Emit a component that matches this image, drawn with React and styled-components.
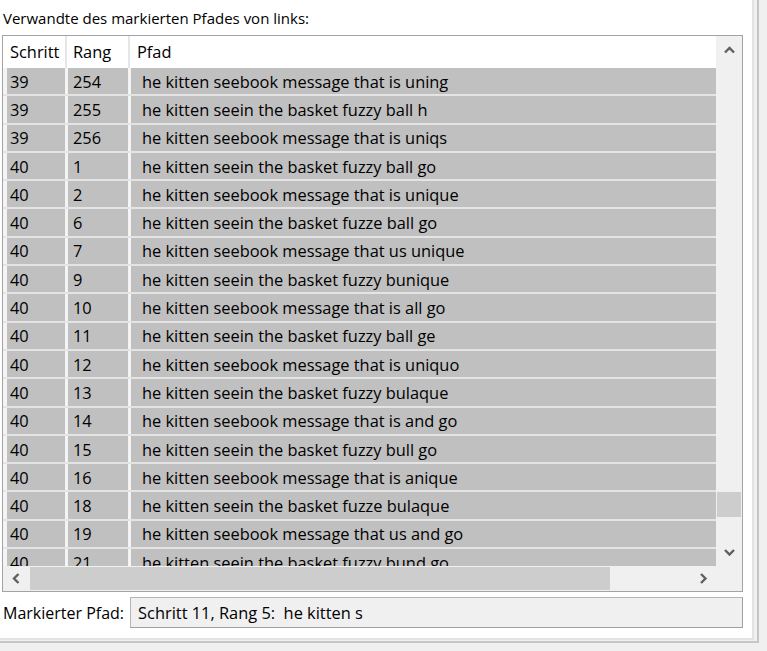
import React from "react";
import styled, { createGlobalStyle } from "styled-components";

const GlobalStyle = createGlobalStyle`
  html, body {
    margin: 0;
    padding: 0;
    background: #f0f0f0;
  }
  body {
    font-family: "Open Sans", "Noto Sans", sans-serif;
    color: #000;
  }
`;

const rows = [
  ["39", "254", "he kitten seebook message that is uning"],
  ["39", "255", "he kitten seein the basket fuzzy ball h"],
  ["39", "256", "he kitten seebook message that is uniqs"],
  ["40", "1", "he kitten seein the basket fuzzy ball go"],
  ["40", "2", "he kitten seebook message that is unique"],
  ["40", "6", "he kitten seein the basket fuzze ball go"],
  ["40", "7", "he kitten seebook message that us unique"],
  ["40", "9", "he kitten seein the basket fuzzy bunique"],
  ["40", "10", "he kitten seebook message that is all go"],
  ["40", "11", "he kitten seein the basket fuzzy ball ge"],
  ["40", "12", "he kitten seebook message that is uniquo"],
  ["40", "13", "he kitten seein the basket fuzzy bulaque"],
  ["40", "14", "he kitten seebook message that is and go"],
  ["40", "15", "he kitten seein the basket fuzzy bull go"],
  ["40", "16", "he kitten seebook message that is anique"],
  ["40", "18", "he kitten seein the basket fuzze bulaque"],
  ["40", "19", "he kitten seebook message that us and go"],
  ["40", "21", "he kitten seein the basket fuzzy bund go"],
];

const Screen = styled.div`
  width: 767px;
  height: 651px;
  overflow: hidden;
  background: #f0f0f0;
`;

const Frame = styled.div`
  width: 759px;
  height: 643px;
  border-right: 2px solid #c6c6c6;
  border-bottom: 2px solid #c6c6c6;
  background: #f0f0f0;
  box-sizing: border-box;
`;

const Panel = styled.div`
  width: 754px;
  height: 640px;
  box-sizing: border-box;
  background: #fff;
  border-right: 2px solid #e3e3e3;
  border-bottom: 2px solid #e3e3e3;
  display: flex;
  flex-direction: column;
  padding: 0 0 0 2px;
`;

const Title = styled.div`
  height: 35px;
  display: flex;
  align-items: center;
  padding-left: 1px;
  padding-top: 1px;
  box-sizing: border-box;
  font-size: 15px;
`;

const ListBox = styled.div`
  width: 741px;
  height: 557px;
  box-sizing: border-box;
  border: 1px solid #a3a3a3;
  display: grid;
  grid-template-columns: 1fr 26px;
  grid-template-rows: 1fr 25px;
  background: #fff;
`;

const Content = styled.div`
  overflow: hidden;
  display: flex;
  flex-direction: column;
  font-size: 16.4px;
`;

const cols = "58px 60px 1fr";

const HeaderRow = styled.div`
  display: grid;
  grid-template-columns: ${cols};
  column-gap: 3px;
  height: 32px;
  flex-shrink: 0;
  padding-left: 4px;
  background: #fff;
`;

const HeaderCell = styled.div`
  display: flex;
  align-items: center;
  padding-left: ${(p) => p.$pad}px;
  padding-bottom: 2px;
  white-space: nowrap;
  position: relative;
  &::after {
    content: "";
    display: ${(p) => (p.$last ? "none" : "block")};
    position: absolute;
    right: -2px;
    top: 0;
    bottom: 0;
    width: 2px;
    background: #e6e6e6;
  }
`;

const Row = styled.div`
  display: grid;
  grid-template-columns: ${cols};
  column-gap: 3px;
  height: 26.3px;
  flex-shrink: 0;
  padding-left: 4px;
  border-bottom: 2px solid #e4e4e4;
  background: #f4f4f4;
`;

const Cell = styled.div`
  background: #c0c0c0;
  display: flex;
  align-items: center;
  padding-left: ${(p) => p.$pad}px;
  white-space: nowrap;
  overflow: hidden;
`;

const VScroll = styled.div`
  background: #f0f0f0;
  display: flex;
  flex-direction: column;
`;

const HScroll = styled.div`
  background: #f0f0f0;
  display: flex;
  align-items: center;
`;

const Corner = styled.div`
  background: #f0f0f0;
`;

const ArrowButton = styled.div`
  flex: 0 0 ${(p) => p.$size}px;
  display: flex;
  align-items: center;
  justify-content: center;
  align-self: stretch;
`;

const VTrack = styled.div`
  flex: 1;
  padding: 0 1px;
`;

const VThumb = styled.div`
  margin-top: ${(p) => p.$offset}px;
  height: 25px;
  background: #cdcdcd;
`;

const HTrack = styled.div`
  flex: 1;
  align-self: stretch;
  padding: 1px 0;
  display: flex;
`;

const HThumb = styled.div`
  margin-left: ${(p) => p.$offset}px;
  width: ${(p) => p.$size}px;
  background: #cdcdcd;
`;

const Bottom = styled.div`
  width: 741px;
  display: flex;
  align-items: center;
  gap: 6px;
  margin-top: 5px;
  padding-left: 1px;
  box-sizing: border-box;
`;

const Label = styled.span`
  white-space: nowrap;
  font-size: 16px;
`;

const Field = styled.div`
  flex: 1;
  height: 31px;
  box-sizing: border-box;
  background: #f0f0f0;
  border: 1px solid #b4b4b4;
  border-right-color: #a0a0a0;
  border-bottom-color: #a0a0a0;
  display: flex;
  align-items: center;
  padding-left: 7px;
  white-space: pre;
  font-size: 16.4px;
`;

const Chevron = ({ dir }) => {
  const paths = {
    up: "M1 6.5 L5.5 2 L10 6.5",
    down: "M1 2 L5.5 6.5 L10 2",
    left: "M6.5 1 L2 5.5 L6.5 10",
    right: "M2 1 L6.5 5.5 L2 10",
  };
  const vertical = dir === "up" || dir === "down";
  return (
    <svg
      width={vertical ? 11 : 9}
      height={vertical ? 9 : 11}
      viewBox={vertical ? "0 0 11 9" : "0 0 9 11"}
    >
      <path d={paths[dir]} fill="none" stroke="#606060" strokeWidth="2.4" />
    </svg>
  );
};

export default function App() {
  return (
    <Screen>
      <GlobalStyle />
      <Frame>
        <Panel>
          <Title>Verwandte des markierten Pfades von links:</Title>
          <ListBox>
            <Content>
              <HeaderRow>
                <HeaderCell $pad={3}>Schritt</HeaderCell>
                <HeaderCell $pad={5}>Rang</HeaderCell>
                <HeaderCell $pad={6} $last>
                  Pfad
                </HeaderCell>
              </HeaderRow>
              {rows.map(([step, rank, path], i) => (
                <Row key={i}>
                  <Cell $pad={3}>{step}</Cell>
                  <Cell $pad={5}>{rank}</Cell>
                  <Cell $pad={11}>{path}</Cell>
                </Row>
              ))}
            </Content>
            <VScroll>
              <ArrowButton $size={28}>
                <Chevron dir="up" />
              </ArrowButton>
              <VTrack>
                <VThumb $offset={428} />
              </VTrack>
              <ArrowButton $size={28}>
                <Chevron dir="down" />
              </ArrowButton>
            </VScroll>
            <HScroll>
              <ArrowButton $size={26}>
                <Chevron dir="left" />
              </ArrowButton>
              <HTrack>
                <HThumb $offset={1} $size={580} />
              </HTrack>
              <ArrowButton $size={26}>
                <Chevron dir="right" />
              </ArrowButton>
            </HScroll>
            <Corner />
          </ListBox>
          <Bottom>
            <Label>Markierter Pfad:</Label>
            <Field>Schritt 11, Rang 5:  he kitten s</Field>
          </Bottom>
        </Panel>
      </Frame>
    </Screen>
  );
}
